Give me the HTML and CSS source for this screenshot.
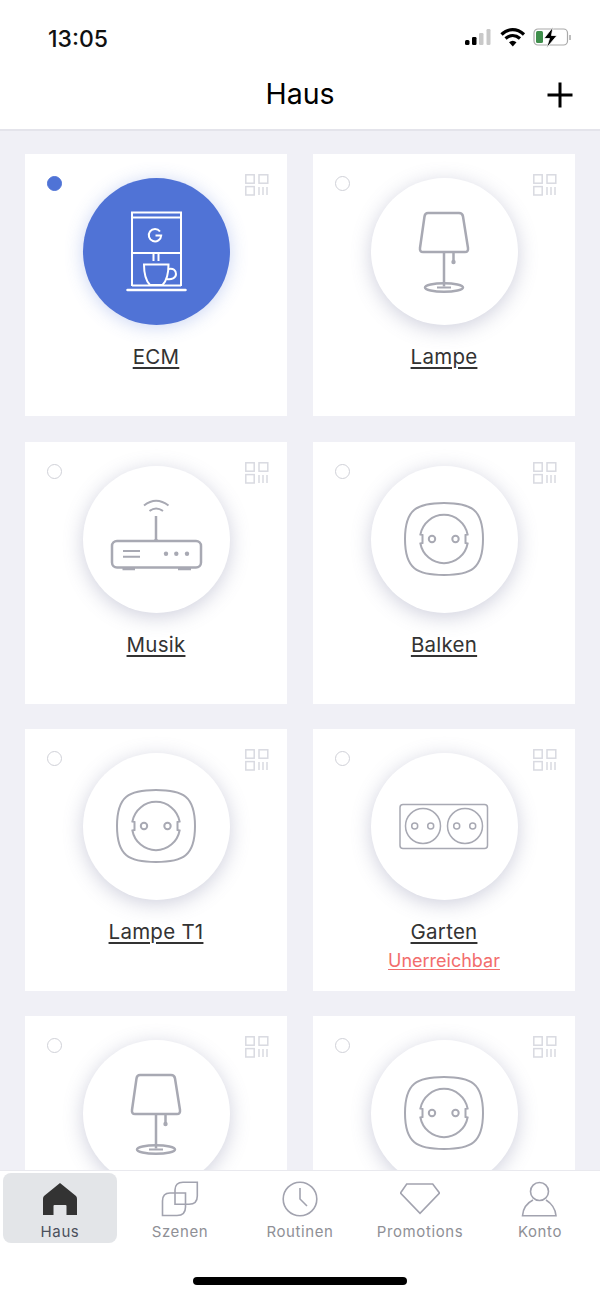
FILE: index.html
```html
<!DOCTYPE html>
<html lang="de">
<head>
  <meta charset="UTF-8">
  <title>Haus</title>
  <link rel="stylesheet" href="styles.css">
</head>
<body>

  <!-- shared icons -->
  <svg class="defs" width="0" height="0">
    <symbol id="qr" viewBox="0 0 24 22">
      <rect x="0.8" y="0.8" width="8.4" height="8.4"/>
      <rect x="14" y="0.8" width="8.8" height="8.4"/>
      <rect x="0.8" y="12.6" width="8.4" height="8.4"/>
      <path d="M14 13v8M18 13v8M22 13v8"/>
    </symbol>
    <symbol id="coffee" viewBox="0 0 147 147">
      <path d="M49 108V34.500H98V108M49 39.500H98M49 75H98"/>
      <path d="M44.500 112H102.500" stroke-width="2.500" stroke-linecap="round"/>
      <path d="M49 107.500H98"/>
      <path d="M77 53.500A6.200 6.200 0 1 0 78.200 57.500H72.500"/>
      <path d="M70.500 76V83M75.500 76V83"/>
      <path d="M61 86.500H85.500C85.500 95 84.500 102 79.500 107H67C62 102 61 95 61 86.500Z"/>
      <path d="M85.500 91C90.500 90 93 92.500 93 96C93 100 88.500 102 83.500 101"/>
    </symbol>
    <symbol id="lamp" viewBox="0 0 147 147">
      <path class="thick" d="M57 35H88Q91.500 35 92 38.500L97 70Q97.500 74 94 74H52Q48.500 74 49 70L53.500 38.500Q54 35 57 35Z"/>
      <path class="thick" d="M73 74V108.500M82.500 74V83"/>
      <circle class="fill" cx="82.500" cy="84" r="2.200"/>
      <ellipse class="thick" cx="73" cy="109.500" rx="19" ry="4.300"/>
      <path d="M66 109.500H80"/>
    </symbol>
    <symbol id="router" viewBox="0 0 147 147">
      <path d="M61 39.500Q73 30 85.500 39.500M66.500 45Q73 40 80 45"/>
      <path class="thick" d="M73 50V74"/>
      <path class="fill" d="M69.500 75Q73 71 76.500 75Z"/>
      <rect class="thick" x="29" y="75" width="89" height="26.500" rx="5"/>
      <path d="M39.500 103H52M95 103H108" stroke-width="2.500"/>
      <path d="M40 85H57M40 90.800H57"/>
      <circle class="fill" cx="83" cy="87.800" r="2.200"/>
      <circle class="fill" cx="93.300" cy="87.800" r="2.200"/>
      <circle class="fill" cx="104" cy="87.800" r="2.200"/>
    </symbol>
    <symbol id="socket" viewBox="0 0 147 147">
      <path d="M73 37C100 37 112 43 112 73C112 103 100 109 73 109C46 109 34 103 34 73C34 43 46 37 73 37Z"/>
      <path d="M49.400 68.500A24 24 0 0 1 96.600 68.500L94.500 69V77L96.600 77.500A24 24 0 0 1 49.400 77.500L51.500 77V69Z"/>
      <circle cx="61" cy="73" r="3.200"/>
      <circle cx="84.500" cy="73" r="3.200"/>
    </symbol>
    <symbol id="double" viewBox="0 0 147 147">
      <g class="thin">
        <rect x="29" y="51.500" width="87.500" height="44" rx="3"/>
        <circle cx="52" cy="73" r="17.500"/>
        <circle cx="94" cy="73" r="17.500"/>
        <circle cx="43.700" cy="73" r="3"/>
        <circle cx="59.700" cy="73" r="3"/>
        <circle cx="85.700" cy="73" r="3"/>
        <circle cx="101.700" cy="73" r="3"/>
      </g>
    </symbol>
  </svg>

  <div class="phone">
    <div class="statusbar">
      <span class="time">13:05</span>
      <svg class="status-icons" width="110" height="24" viewBox="0 0 110 24">
        <rect x="1" y="13" width="4.500" height="5" rx="1.500" fill="#000"/>
        <rect x="8" y="10" width="4.500" height="8" rx="1.200" fill="#000"/>
        <rect x="15" y="6" width="4.500" height="12" rx="1.200" fill="#c9c9c9"/>
        <rect x="22.500" y="2" width="4" height="16" rx="1.200" fill="#c9c9c9"/>
        <path d="M37.500 7.500C44 1 53 1 60 7.500M41.500 11.500C46 7.500 51.500 7.500 56 11.500" fill="none" stroke="#000" stroke-width="3.200"/>
        <path d="M45 15.200Q48.800 12.200 52.500 15.200L48.800 19.500Z" fill="#000"/>
        <rect x="70" y="2" width="33.500" height="16" rx="4" fill="none" stroke="#a9a9a9" stroke-width="1.200"/>
        <rect x="72" y="4" width="7" height="12" rx="1.500" fill="#3f8f4c"/>
        <path d="M106 8V13" stroke="#a9a9a9" stroke-width="1.500"/>
        <path d="M89 0L80 11.500H85.500L82.500 21L93 8.500H87.500Z" fill="#000" stroke="#fff" stroke-width="0.800"/>
      </svg>
    </div>

    <header class="topbar">
      <h1 class="title">Haus</h1>
      <svg class="add" width="26" height="26" viewBox="0 0 26 26">
        <path d="M0.500 13H25.500M13 0.500V25.500" stroke="#000" stroke-width="3"/>
      </svg>
    </header>

    <main class="content">
      <div class="grid">
        <div class="card">
          <span class="radio on"></span>
          <svg class="qr"><use href="#qr"/></svg>
          <div class="round active"><svg class="device"><use href="#coffee"/></svg></div>
          <a class="name">ECM</a>
        </div>
        <div class="card">
          <span class="radio"></span>
          <svg class="qr"><use href="#qr"/></svg>
          <div class="round"><svg class="device"><use href="#lamp"/></svg></div>
          <a class="name">Lampe</a>
        </div>
        <div class="card">
          <span class="radio"></span>
          <svg class="qr"><use href="#qr"/></svg>
          <div class="round"><svg class="device"><use href="#router"/></svg></div>
          <a class="name">Musik</a>
        </div>
        <div class="card">
          <span class="radio"></span>
          <svg class="qr"><use href="#qr"/></svg>
          <div class="round"><svg class="device"><use href="#socket"/></svg></div>
          <a class="name">Balken</a>
        </div>
        <div class="card">
          <span class="radio"></span>
          <svg class="qr"><use href="#qr"/></svg>
          <div class="round"><svg class="device"><use href="#socket"/></svg></div>
          <a class="name">Lampe T1</a>
        </div>
        <div class="card">
          <span class="radio"></span>
          <svg class="qr"><use href="#qr"/></svg>
          <div class="round"><svg class="device"><use href="#double"/></svg></div>
          <a class="name">Garten</a>
          <a class="offline">Unerreichbar</a>
        </div>
        <div class="card">
          <span class="radio"></span>
          <svg class="qr"><use href="#qr"/></svg>
          <div class="round"><svg class="device"><use href="#lamp"/></svg></div>
        </div>
        <div class="card">
          <span class="radio"></span>
          <svg class="qr"><use href="#qr"/></svg>
          <div class="round"><svg class="device"><use href="#socket"/></svg></div>
        </div>
      </div>
    </main>

    <nav class="tabbar">
      <div class="tabs">
        <div class="tab selected">
          <svg class="tab-icon" viewBox="0 0 40 40">
            <path class="solid" d="M20 4L36 17Q37 18 37 20V36H26.500V27Q26.500 26 25.500 26H14.500Q13.500 26 13.500 27V36H3V20Q3 18 4 17Z"/>
          </svg>
          <span>Haus</span>
        </div>
        <div class="tab">
          <svg class="tab-icon" viewBox="0 0 40 40">
            <path d="M37.300 3.300V17Q37.300 25.300 29 25.300H15V11Q15 3.300 23 3.300Z"/>
            <path d="M2.500 36.500V22Q2.500 14 10 14H25.500V28Q25.500 36.500 17 36.500Z"/>
          </svg>
          <span>Szenen</span>
        </div>
        <div class="tab">
          <svg class="tab-icon" viewBox="0 0 40 40">
            <circle cx="20" cy="20" r="16.800"/>
            <path d="M20 9V20L27 27"/>
          </svg>
          <span>Routinen</span>
        </div>
        <div class="tab">
          <svg class="tab-icon" viewBox="0 0 40 40">
            <path d="M6.700 5H32.700L39.500 14L20 34.300L0.500 14Z"/>
          </svg>
          <span>Promotions</span>
        </div>
        <div class="tab">
          <svg class="tab-icon" viewBox="0 0 40 40">
            <circle cx="19.500" cy="12.500" r="9"/>
            <path d="M13 21C7 24 3 30 2.500 36.700H36C35.500 30 31 24 26 21"/>
          </svg>
          <span>Konto</span>
        </div>
      </div>
      <div class="home-bar"></div>
    </nav>
  </div>

</body>
</html>
```

FILE: styles.css
```css
body {
  margin: 0;
  font-family: Inter, "Liberation Sans", sans-serif;
  background: #fff;
}
.defs {
  position: absolute;
}
.phone {
  width: 600px;
  height: 1298px;
  display: flex;
  flex-direction: column;
  overflow: hidden;
}

/* status bar */
.statusbar {
  height: 62px;
  padding: 16px 26px 0 48px;
  box-sizing: border-box;
  display: flex;
  justify-content: space-between;
  align-items: center;
  flex: none;
}
.time {
  font-size: 23px;
  font-weight: 500;
  color: #111;
}

/* header */
.topbar {
  height: 69px;
  flex: none;
  display: flex;
  align-items: center;
  justify-content: center;
  position: relative;
  padding-bottom: 4px;
  box-sizing: border-box;
  border-bottom: 2px solid #e4e4eb;
}
.title {
  margin: 0;
  font-size: 28.5px;
  font-weight: 400;
  color: #000;
}
.add {
  position: absolute;
  right: 27px;
  top: 20px;
}

/* devices */
.content {
  flex: 1;
  min-height: 0;
  overflow: hidden;
  background: #f0f0f6;
  padding: 23.4px 25px 0;
}
.grid {
  display: grid;
  grid-template-columns: 262px 262px;
  grid-auto-rows: 262px;
  column-gap: 26px;
  row-gap: 25.25px;
}
.card {
  position: relative;
  background: #fff;
  display: flex;
  flex-direction: column;
  align-items: center;
  padding-top: 24px;
  box-sizing: border-box;
}
.radio {
  position: absolute;
  left: 22px;
  top: 22px;
  width: 15px;
  height: 15px;
  box-sizing: border-box;
  border: 1.5px solid #d0d1d8;
  border-radius: 50%;
}
.radio.on {
  background: #4f73d6;
  border-color: #4f73d6;
}
.qr {
  position: absolute;
  right: 18px;
  top: 20px;
  width: 24px;
  height: 22px;
  fill: none;
  stroke: #d9dae1;
  stroke-width: 1.5;
}
.round {
  width: 147px;
  height: 147px;
  flex: none;
  border-radius: 50%;
  background: #fff;
  box-shadow: 0 4px 20px rgba(105, 110, 150, 0.32);
  color: #a8a9b3;
}
.round.active {
  background: #5073d6;
  color: #fff;
  box-shadow: 0 2px 18px rgba(80, 115, 214, 0.3);
}
.device {
  display: block;
  width: 147px;
  height: 147px;
  fill: none;
  stroke: currentColor;
  stroke-width: 2;
}
.thick {
  stroke-width: 2.5;
}
.thin {
  stroke-width: 1.5;
}
.fill {
  fill: currentColor;
  stroke: none;
}
.name {
  margin-top: 20px;
  font-size: 20.5px;
  line-height: 24px;
  letter-spacing: 0.25px;
  color: #333;
  text-decoration: underline;
  text-underline-offset: 3px;
  text-decoration-thickness: 1.5px;
}
.offline {
  margin-top: 6px;
  font-size: 18px;
  line-height: 22px;
  color: #f26d6d;
  text-decoration: underline;
  text-decoration-thickness: 1px;
  text-underline-offset: 2px;
}

/* bottom tabs */
.tabbar {
  height: 128px;
  flex: none;
  background: #fff;
  border-top: 1px solid #e9e9ee;
  box-sizing: border-box;
  display: flex;
  flex-direction: column;
}
.tabs {
  display: grid;
  grid-template-columns: repeat(5, 120px);
  margin-top: 2px;
}
.tab {
  height: 70px;
  margin: 0 3px;
  border-radius: 8px;
  display: flex;
  flex-direction: column;
  align-items: center;
  padding-top: 6px;
  box-sizing: border-box;
  font-size: 15px;
  line-height: 18px;
  letter-spacing: 0.6px;
  color: #8f9096;
}
.tab.selected {
  background: #e3e5e8;
  color: #4b505c;
}
.tab-icon {
  width: 40px;
  height: 40px;
  margin-bottom: 4px;
  fill: none;
  stroke: #a2a3af;
  stroke-width: 1.6;
}
.tab-icon .solid {
  fill: #333;
  stroke: none;
}
.home-bar {
  width: 214px;
  height: 8px;
  margin: 34px auto 0;
  border-radius: 4px;
  background: #000;
}
```
